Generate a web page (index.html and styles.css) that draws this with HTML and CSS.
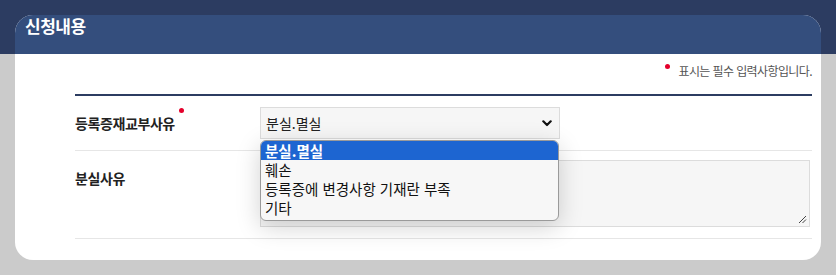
FILE: index.html
```html
<!DOCTYPE html>
<html lang="ko">
<head>
<meta charset="utf-8">
<link rel="stylesheet" href="styles.css">
</head>
<body>
<div class="page">
  <section class="card">
    <header class="card-head"><h2 class="card-title">신청내용</h2></header>
    <div class="card-body">
      <p class="req-note"><span class="dot"></span>표시는 필수 입력사항입니다.</p>
      <div class="form">
        <div class="row">
          <div class="label">등록증재교부사유<span class="dot dot-sup"></span></div>
          <div class="field field-select">
            <div class="select">
              <span>분실.멸실</span>
              <svg class="chev" width="10" height="7" viewBox="0 0 10 7"><path d="M1.3 1.3 L5 5 L8.7 1.3" fill="none" stroke="#111" stroke-width="2.2" stroke-linecap="round" stroke-linejoin="round"/></svg>
            </div>
            <ul class="listbox">
              <li class="opt selected">분실.멸실</li>
              <li class="opt">훼손</li>
              <li class="opt">등록증에 변경사항 기재란 부족</li>
              <li class="opt">기타</li>
            </ul>
          </div>
        </div>
        <div class="row row-tall">
          <div class="label label-top">분실사유</div>
          <div class="field">
            <div class="textarea">
              <svg class="grip" width="10" height="10" viewBox="0 0 10 10"><path d="M9 2 L2 9 M9 5.5 L5.5 9" stroke="#444" stroke-width="1"/></svg>
            </div>
          </div>
        </div>
      </div>
    </div>
  </section>
</div>
</body>
</html>
```

FILE: styles.css
```css
* { box-sizing: border-box; }
html, body { margin: 0; padding: 0; }
body {
  width: 836px;
  height: 275px;
  overflow: hidden;
  background: #cbcbcb;
  font-family: "Noto Sans CJK KR", "Noto Sans", sans-serif;
}
.page {
  height: 275px;
  padding: 15px 15px 0 15px;
  background: linear-gradient(#2c3c61 0, #2c3c61 54px, #cbcbcb 54px);
}
.card {
  width: 806px;
  height: 245px;
  background: #fff;
  border-radius: 18px;
}
.card-head {
  height: 39px;
  background: #344e7d;
  padding: 0 10px;
  border-radius: 18px 18px 0 0;
}
.card-title {
  margin: 0;
  color: #fff;
  font-size: 17px;
  font-weight: 700;
  line-height: 22px;
  letter-spacing: -0.5px;
}
.card-body {
  padding: 8px 9px 0 60px;
}
.req-note {
  margin: 0;
  text-align: right;
  font-size: 12px;
  line-height: 18px;
  color: #555;
  letter-spacing: -0.6px;
  height: 32px;
}
.dot {
  display: inline-block;
  width: 5px;
  height: 5px;
  border-radius: 50%;
  background: #e4002b;
  vertical-align: top;
  margin: 2px 8px 0 0;
}
.form {
  border-top: 2px solid #2c3c61;
}
.row {
  display: flex;
  border-bottom: 1px solid #e6e6e6;
  padding: 11px 0 11px;
}
.row-tall {
  padding: 9px 2px 11px 0;
}
.label {
  width: 185px;
  flex: none;
  font-size: 14px;
  font-weight: 700;
  color: #222;
  display: flex;
  align-items: center;
  letter-spacing: -0.4px;
}
.dot-sup {
  align-self: flex-start;
  margin: 1px 0 0 4px;
}
.label-top {
  align-items: flex-start;
  padding-top: 8px;
}
.field { flex: 1; }
.field-select { position: relative; }
.select {
  width: 300px;
  height: 32px;
  background: #f6f6f6;
  border: 1px solid #dcdcdc;
  display: flex;
  align-items: center;
  justify-content: space-between;
  padding: 0 7px 0 5px;
  font-size: 14px;
  color: #222;
}
.chev { margin-top: 1px; }
.listbox {
  position: absolute;
  left: 0;
  top: 33px;
  width: 299px;
  margin: 0;
  padding: 0 0 3px;
  list-style: none;
  background: #f7f7f7;
  border: 1px solid #9a9a9a;
  border-radius: 6px;
  overflow: hidden;
  box-shadow: 0 6px 24px rgba(0,0,0,0.18);
  z-index: 2;
}
.opt {
  height: 19px;
  line-height: 19px;
  font-size: 14.5px;
  color: #111;
  padding: 0 4px;
}
.opt.selected {
  background: #1d65d1;
  color: #fff;
  font-weight: 700;
}
.textarea {
  height: 67px;
  background: #f6f6f6;
  border: 1px solid #dcdcdc;
  position: relative;
}
.grip {
  position: absolute;
  right: 2px;
  bottom: 2px;
}
```
